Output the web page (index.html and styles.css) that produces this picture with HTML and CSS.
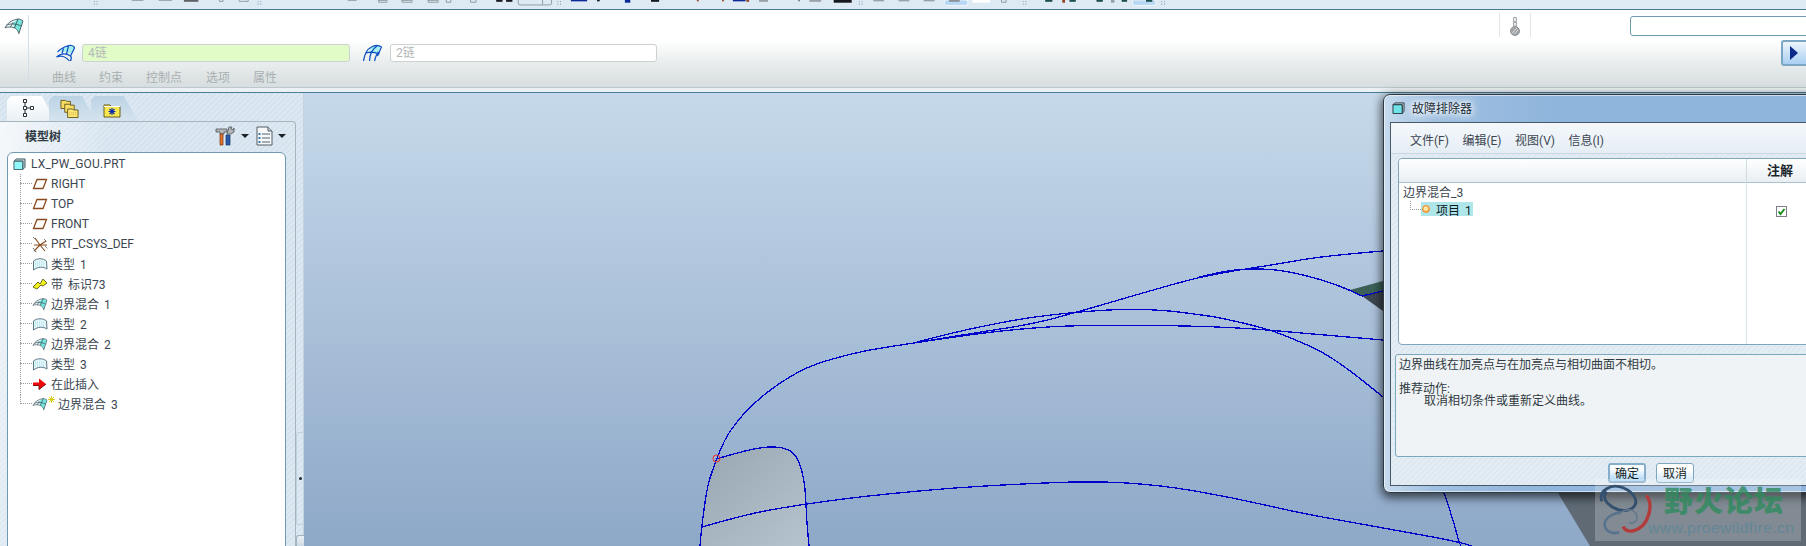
FILE: index.html
```html
<!DOCTYPE html>
<html lang="zh">
<head>
<meta charset="utf-8">
<title>故障排除器</title>
<link rel="stylesheet" href="styles.css">
</head>
<body>
<svg class="defs" width="0" height="0" aria-hidden="true">
  <defs>
    <symbol id="i-blend" viewBox="0 0 20 18">
      <path d="M1 11C3 6 8 3 14 2C16 2 18 3 19 4L15 16C14 12 10 10 6 10C4 10 2 10 1 11Z" fill="#f4fbfc"/>
      <path d="M9 6C11 4 13 3 14 2L19 4L15 16C14 13 12 11 10 10.500Z" fill="#74e6dc"/>
      <path d="M1 11C3 6 8 3 14 2C16 2 18 3 19 4L15 16M1 11C2 10 4 10 6 10C10 10 14 12 15 17M9 5.500L6.500 10M14 2L10.500 11M3 8C8 6 13 7 17 9" fill="none" stroke="#3f5560" stroke-width=".9"/>
    </symbol>
    <symbol id="i-plane" viewBox="0 0 16 12">
      <path d="M5 1.500H14.500L11 10.500H1.500Z" fill="none" stroke="#8a4a1c" stroke-width="1.300"/>
    </symbol>
    <symbol id="i-surf" viewBox="0 0 16 14">
      <path d="M1.500 4C5 1 11 1 14.500 4L15 12C11 9.500 6 9.500 1.500 13Z" fill="#e6f7fa" stroke="#5a7684" stroke-width="1"/>
      <path d="M3 5H13M3 7H13M3 9H13" stroke="#9fdcec" stroke-dasharray="1 1" stroke-width="1"/>
    </symbol>
  </defs>
</svg>

<div class="stage">
  <svg class="toolstrip" viewBox="0 0 1806 10" width="1806" height="10" aria-hidden="true">
    <g fill="#9aa1a6">
      <rect x="46" width="13" height="1"/><rect x="76" width="15" height="1"/><rect x="286" width="10" height="1"/>
      <rect x="320" width="9" height="1"/><rect x="346" width="11" height="1"/><rect x="375" width="11" height="1"/>
      <rect x="743" width="10" height="2"/><rect x="799" width="13" height="2"/><rect x="870" width="12" height="1.500"/>
      <rect x="898" width="12" height="1.500"/><rect x="926" width="12" height="1.500"/>
    </g>
    <g fill="none" stroke="#8c959b">
      <path d="M143.500 0V1.500H147.500V0M165.500 0V1.500H175.500V0M320.500 0V2.500H329.500V0M346.500 0V2.500H357.500V0M375.500 0V2.500H386.500V0M395.500 0V2.500H400.500V0M422.500 0V2.500H428.500V0"/>
      <path d="M475.500 0V3.500Q475.500 5.500 478 5.500H510.500Q512.500 5.500 512.500 3.500V0M502.500 0V5"/>
      <path d="M1012.500 0V2.500H1017.500V0"/>
    </g>
    <rect x="104" width="16" height="2" fill="#5e6266"/>
    <g fill="#15181c"><rect x="451" width="7" height="2"/><rect x="462" width="7" height="2"/><rect x="563" width="3" height="1.500"/><rect x="623" width="9" height="2"/><rect x="787" width="1" height="1.500"/><rect x="826" width="20" height="3"/></g>
    <g fill="#0a2a9a"><rect x="534" width="18" height="1.500"/><rect x="594" width="6" height="3"/><rect x="714" width="14" height="1.500"/></g>
    <g fill="#93401e"><rect x="674" width="2" height="1.500"/><rect x="702" width="2" height="1.500"/><rect x="729" width="3" height="2"/><rect x="1080" width="3" height="3"/></g>
    <rect x="949" width="26" height="6" rx="2" fill="#b9d8f4" stroke="#f4f9fd"/>
    <rect x="954" width="12" height="2" fill="#8b9298"/>
    <rect x="980" width="20" height="3" fill="#fff"/>
    <rect x="1134" width="4" height="3" fill="#9aa1a6"/>
    <rect x="1158" width="26" height="6" rx="2" fill="#b9d8f4" stroke="#f4f9fd"/>
    <g fill="#1b4f4b">
      <rect x="1061" width="8" height="2"/><rect x="1088" width="7" height="2"/><rect x="1118" width="7" height="2"/><rect x="1146" width="6" height="2"/><rect x="1173" width="7" height="2"/>
    </g>
    <g fill="#6c8aa0">
      <path d="M4 1h1v1H4zM7 1h1v1H7zM4 4h1v1H4zM7 4h1v1H7z"/>
      <path d="M186 1h1v1h-1zM189 1h1v1h-1zM186 4h1v1h-1zM189 4h1v1h-1z"/>
      <path d="M519 1h1v1h-1zM522 1h1v1h-1zM519 4h1v1h-1zM522 4h1v1h-1z"/>
      <path d="M854 1h1v1h-1zM857 1h1v1h-1zM854 4h1v1h-1zM857 4h1v1h-1z"/>
      <path d="M1036 1h1v1h-1zM1039 1h1v1h-1zM1036 4h1v1h-1zM1039 4h1v1h-1z"/>
      <path d="M1190 1h1v1h-1zM1193 1h1v1h-1zM1190 4h1v1h-1zM1193 4h1v1h-1z"/>
    </g>
  </svg>

  <header class="ribbon">
    <div class="ribbon-mode">
      <svg class="ribbon-mode-icon" viewBox="0 0 20 18" aria-hidden="true"><use href="#i-blend"/></svg>
    </div>
    <div class="ribbon-main">
      <div class="collector-row">
        <svg class="collector-icon" viewBox="0 0 20 18" aria-hidden="true">
          <path d="M3 8C7 4 12 2 16 2C18 2 19 3 19 4L16 10C12 8 8 7 3 8Z" fill="#a5efee"/>
          <path d="M2 8C6 4 12 1 16 1.500C18 2 19 3 19 4L15 12M1 13C5 9 11 9 15 12C16 13 16 15 15 17M1 13C6 11 11 13 14 17M8 4.500L6.500 9.500M13 2L11 10" fill="none" stroke="#0c4fc0" stroke-width="1.200"/>
        </svg>
        <div class="collector collector--active">4链</div>
        <svg class="collector-icon collector-icon--second" viewBox="0 0 20 18" aria-hidden="true">
          <path d="M8 4C11 2 15 1 18 2L15 11C13 9 10 9 7 10Z" fill="#a5efee"/>
          <path d="M1 17C2 10 5 5 9 3C12 1 16 1 19 3L15 12M7 17C7 10 10 5 15 1.500M12 17C13 13 14 10 16 8M4 9C8 7 12 8 17 10" fill="none" stroke="#0c4fc0" stroke-width="1.200"/>
        </svg>
        <div class="collector">2链</div>
      </div>
      <nav class="ribbon-tabs">
        <span class="ribbon-tab">曲线</span>
        <span class="ribbon-tab">约束</span>
        <span class="ribbon-tab">控制点</span>
        <span class="ribbon-tab">选项</span>
        <span class="ribbon-tab">属性</span>
      </nav>
    </div>
    <div class="ribbon-gauge">
      <svg class="gauge-icon" viewBox="0 0 12 20" aria-hidden="true">
        <path d="M4.500 1.500H7.500V5.500H4.500ZM4.500 6.500H7.500V10H4.500Z" fill="#eceeef" stroke="#a5a9ab"/>
        <circle cx="6" cy="15" r="4.500" fill="#a3a7a9" stroke="#8f9496"/>
        <path d="M3 17L8 12M5 18L9 14" stroke="#d3d5d6"/>
      </svg>
    </div>
    <div class="ribbon-side">
      <div class="side-input"></div>
      <button class="run-button" type="button"><span class="run-arrow"></span></button>
    </div>
  </header>
  <div class="ribbon-edge"></div>

  <main class="workspace">
    <aside class="side-panel">
      <div class="panel-tabs">
        <div class="panel-tab panel-tab--active">
          <svg class="tab-icon" viewBox="0 0 14 19" aria-hidden="true">
            <path d="M1.500 .5h3v3h-3zM1.500 7.500h3v3h-3zM1.500 14.500h3v3h-3zM8.500 7.500h3v3h-3z" fill="#fff" stroke="#2a2f33"/>
            <path d="M3 4V7M3 11V14M5 9H8" stroke="#2a2f33"/>
          </svg>
        </div>
        <div class="panel-tab">
          <svg class="tab-icon tab-icon--folders" viewBox="0 0 20 20" aria-hidden="true">
            <path d="M1 1.500H6L7 2.500H11V10H1Z" fill="#f6dc62" stroke="#6b5a1c"/>
            <path d="M5 5.500H10L11 6.500H15V14H5Z" fill="#f8e06a" stroke="#6b5a1c"/>
            <path d="M8 10.500H13L14 11.500H19V19.500H8Z" fill="#fbe878" stroke="#6b5a1c"/>
            <path d="M10 14.500H17M10 16.500H17" stroke="#d7a93a" stroke-dasharray="1 1"/>
          </svg>
        </div>
        <div class="panel-tab">
          <svg class="tab-icon tab-icon--star" viewBox="0 0 18 15" aria-hidden="true">
            <path d="M1 2H7L8 3.500H17V14H1Z" fill="#f9e94f" stroke="#665a1c"/>
            <path d="M1 3.500H17" stroke="#fff"/>
            <path d="M9 5V12M5.500 8.500H12.500M6.500 6L11.500 11M11.500 6L6.500 11" stroke="#0a2aa8" stroke-width="1.100"/>
          </svg>
        </div>
      </div>

      <section class="tree-card">
        <div class="tree-head">
          <span class="tree-title">模型树</span>
          <div class="tree-tools">
            <svg class="tool-icon" viewBox="0 0 20 20" aria-hidden="true">
              <path d="M1 3H12V6H9V8H5V6H1Z" fill="#b4b7b9" stroke="#4c5053" stroke-width=".8"/>
              <path d="M5 8H8V19H5Z" fill="#e2762a" stroke="#7d2b10" stroke-width=".7"/>
              <path d="M11 9H15V19H11Z" fill="#2a5aa8" stroke="#18356a" stroke-width=".7"/>
              <path d="M12 8L14 1H17L16 3L18 4L19 2V6L16 8Z" fill="#b4b7b9" stroke="#4c5053" stroke-width=".8"/>
            </svg>
            <span class="caret"></span>
            <svg class="tool-icon tool-icon--doc" viewBox="0 0 17 20" aria-hidden="true">
              <path d="M1 1H12L16 5V19H1Z" fill="#f4f8fb" stroke="#555d63"/>
              <path d="M12 1V5H16" fill="#c9d3da" stroke="#555d63"/>
              <path d="M6 8H14M6 12H14M6 16H14" stroke="#58636b"/>
              <path d="M2.500 7h2v2h-2zM2.500 11h2v2h-2zM2.500 15h2v2h-2z" fill="#3e73a8"/>
            </svg>
            <span class="caret"></span>
          </div>
        </div>
        <div class="tree-box">
          <div class="tree-root">
            <svg class="root-icon" viewBox="0 0 14 13" aria-hidden="true">
              <path d="M3.500 1H13V10L10.500 12.500V3.500H1Z" fill="#b7c6cd" stroke="#3e5a62"/>
              <path d="M1 3.500H10.500V12.500H1Z" fill="#8ff8fb" stroke="#3e5a62"/>
            </svg>
            <span class="root-label">LX_PW_GOU.PRT</span>
          </div>
          <ul class="tree-list">
            <li class="tree-row"><i class="stub"></i><svg class="row-icon" viewBox="0 0 16 12" aria-hidden="true"><use href="#i-plane"/></svg><span class="row-label--latin">RIGHT</span></li>
            <li class="tree-row"><i class="stub"></i><svg class="row-icon" viewBox="0 0 16 12" aria-hidden="true"><use href="#i-plane"/></svg><span class="row-label--latin">TOP</span></li>
            <li class="tree-row"><i class="stub"></i><svg class="row-icon" viewBox="0 0 16 12" aria-hidden="true"><use href="#i-plane"/></svg><span class="row-label--latin">FRONT</span></li>
            <li class="tree-row"><i class="stub"></i><svg class="row-icon row-icon--csys" viewBox="0 0 16 17" aria-hidden="true"><path d="M8 9L3 2M8 9L14 5M8 9L2 15M8 9L13 15M2 9H15" fill="none" stroke="#8a4a1c" stroke-width="1.100"/><path d="M1 1L4 4M12 3L15 6M13 10L16 13M1 12L4 16" stroke="#444" stroke-dasharray="1 1"/></svg><span class="row-label--latin">PRT_CSYS_DEF</span></li>
            <li class="tree-row"><i class="stub"></i><svg class="row-icon" viewBox="0 0 16 14" aria-hidden="true"><use href="#i-surf"/></svg><span class="row-label">类型 1</span></li>
            <li class="tree-row"><i class="stub"></i><svg class="row-icon" viewBox="0 0 16 12" aria-hidden="true"><path d="M1 9L6 4L8 6L11 1L15 5L11 8L9 7L5 11Z" fill="#f4f01c" stroke="#6c6a20"/></svg><span class="row-label">带 标识73</span></li>
            <li class="tree-row"><i class="stub"></i><svg class="row-icon" viewBox="0 0 20 18" aria-hidden="true"><use href="#i-blend"/></svg><span class="row-label">边界混合 1</span></li>
            <li class="tree-row"><i class="stub"></i><svg class="row-icon" viewBox="0 0 16 14" aria-hidden="true"><use href="#i-surf"/></svg><span class="row-label">类型 2</span></li>
            <li class="tree-row"><i class="stub"></i><svg class="row-icon" viewBox="0 0 20 18" aria-hidden="true"><use href="#i-blend"/></svg><span class="row-label">边界混合 2</span></li>
            <li class="tree-row"><i class="stub"></i><svg class="row-icon" viewBox="0 0 16 14" aria-hidden="true"><use href="#i-surf"/></svg><span class="row-label">类型 3</span></li>
            <li class="tree-row"><i class="stub"></i><svg class="row-icon" viewBox="0 0 16 13" aria-hidden="true"><path d="M1 5H7V1L14 6.500L7 12V8H1Z" fill="#ee0a0a"/><path d="M1 8H7V12L14 6.500" fill="none" stroke="#7c1212"/></svg><span class="row-label">在此插入</span></li>
            <li class="tree-row tree-row--last"><i class="stub"></i><svg class="row-icon" viewBox="0 0 20 18" aria-hidden="true"><use href="#i-blend"/></svg><svg class="row-star" viewBox="0 0 8 8" aria-hidden="true"><path d="M4 0V8M0 4H8M1 1L7 7M7 1L1 7" stroke="#d4c400"/></svg><span class="row-label">边界混合 3</span></li>
          </ul>
        </div>
      </section>

      <div class="sash">
        <div class="sash-grip"><i class="sash-dot"></i></div>
        <div class="sash-stub"></div>
      </div>
    </aside>

    <section class="viewport">
      <svg class="model" viewBox="304 93 1502 453" aria-hidden="true">
        <defs>
          <linearGradient id="patch" x1="0" y1="0" x2="1" y2="1">
            <stop offset="0" stop-color="#98a6b2"/>
            <stop offset="1" stop-color="#b6c4d0"/>
          </linearGradient>
        </defs>
        <polygon points="1558,493 1590,546 1806,546 1806,493" fill="#5f6a75"/>
        <polygon points="1350,290 1383,281 1383,291 1362,296" fill="#3c6058"/>
        <polygon points="1362,296 1383,291 1383,311" fill="#3d4750"/>
        <path class="patch" d="M716 459Q740 452 751.500 449.500Q763 447 772.500 447Q782 447 788.500 450Q795 453 798.500 461.500Q802 470 803.500 478.500Q805 487 805.500 495.500Q806 504 806.500 514.500Q807 525 809 546H700Q701 532 704 509.500Q707 487 710 478Q713 469 716 459Z"/>
        <g class="edges">
          <path d="M700 546Q701 532 704 509.500Q707 487 710 478Q713 469 715 463.500Q717 458 721.500 447.500Q726 437 731 430Q736 423 741.500 416.500Q747 410 757 401Q767 392 779.500 383.500Q792 375 803.500 369.500Q815 364 832.500 359Q850 354 865 351Q880 348 914 343"/>
          <path d="M914 343Q928 339 948.500 334Q969 329 994.500 324Q1020 319 1035 317Q1050 315 1064.500 313.500Q1079 312 1100 310.500Q1121 309 1141.500 309.500Q1162 310 1178.500 312Q1195 314 1208.500 316Q1222 318 1245 323.500Q1268 329 1282 334.500Q1296 340 1309.500 346Q1323 352 1339 363Q1355 374 1383 397"/>
          <path d="M914 343Q974 333 1003.500 328.500Q1033 324 1056 317.800Q1079 311.500 1097 306.300Q1115 301 1134 295.500Q1153 290 1176 283.500Q1199 277 1222 273Q1245 269 1261.500 266.500Q1278 264 1300.500 260Q1323 256 1383 251"/>
          <path d="M1199 277Q1225 271 1235 270Q1245 269 1256.500 269Q1268 269 1279.500 270.500Q1291 272 1307 276Q1323 280 1336.500 285Q1350 290 1362 296L1383 291"/>
          <path d="M914 343Q974 334 997 331.500Q1020 329 1040.500 327.500Q1061 326 1088.500 325.500Q1116 325 1155 325.500Q1194 326 1217 327Q1240 328 1254 329Q1268 330 1295.500 332.500Q1323 335 1383 340"/>
          <path d="M716 459Q740 452 751.500 449.500Q763 447 772.500 447Q782 447 788.500 450Q795 453 798.500 461.500Q802 470 803.500 478.500Q805 487 805.500 495.500Q806 504 806.500 514.500Q807 525 809 546"/>
          <path d="M702 527Q730 519 746.500 515Q763 511 784.500 507.500Q806 504 824.500 501.500Q843 499 860 497Q877 495 913.500 491.500Q950 488 985 486Q1020 484 1057 482.500Q1094 481 1127 483Q1160 485 1195 491Q1230 497 1265 505Q1300 513 1325 517.500Q1350 522 1375 526.500Q1400 531 1430 536.500Q1460 542 1472 546"/>
          <path d="M1444 493Q1452 515 1459 542L1461 546"/>
        </g>
        <circle class="pick-mark" cx="716.500" cy="458.500" r="3.500"/>
      </svg>
    </section>
  </main>

  <div class="dialog">
    <div class="dialog-title">
      <svg class="dialog-icon" viewBox="0 0 14 13" aria-hidden="true">
        <path d="M3 1H13V10L11 12.500V3H1Z" fill="#c7d3d9" stroke="#26343c"/>
        <path d="M1 3H11V12.500H1Z" fill="#6fe3e8" stroke="#26343c"/>
      </svg>
      <span class="dialog-name">故障排除器</span>
    </div>
    <div class="dialog-body">
      <nav class="dialog-menu">
        <span>文件(F)</span><span>编辑(E)</span><span>视图(V)</span><span>信息(I)</span>
      </nav>
      <div class="issue-table">
        <div class="issue-head"><span></span><span class="issue-col">注解</span></div>
        <div class="issue-rows">
          <div class="issue-tree">
            <div class="issue-group">边界混合_3</div>
            <div class="issue-item">
              <i class="issue-stub"></i>
              <div class="issue-pick"><i class="issue-dot"></i><span>项目 1</span></div>
            </div>
          </div>
          <div class="issue-marks">
            <svg class="issue-check" viewBox="0 0 11 11" aria-hidden="true">
              <rect x=".5" y=".5" width="10" height="10" fill="#fff" stroke="#7b8187"/>
              <path d="M2.500 5.500L4.500 8L8.500 3" fill="none" stroke="#0f8a12" stroke-width="1.800"/>
            </svg>
          </div>
        </div>
      </div>
      <div class="message">
        <p class="message-line">边界曲线在加亮点与在加亮点与相切曲面不相切。</p>
        <p class="message-head">推荐动作:</p>
        <p class="message-action">取消相切条件或重新定义曲线。</p>
      </div>
      <div class="dialog-actions">
        <button class="dialog-btn dialog-btn--default" type="button">确定</button>
        <button class="dialog-btn" type="button">取消</button>
      </div>
    </div>
  </div>

  <div class="watermark">
    <svg class="watermark-logo" viewBox="0 0 62 58" aria-hidden="true">
      <path d="M5 20C1 9 15 1 27 6C39 11 45 22 35 28C27 32 17 28 11 22C7 18 7 13 10 10" fill="none" stroke="#33506f" stroke-width="3"/>
      <path d="M25 31C13 33 5 40 9 48C11 52 17 54 23 52" fill="none" stroke="#55728e" stroke-width="2.500"/>
      <path d="M51 14C59 24 53 46 39 50C33 52 29 50 27 46" fill="none" stroke="#b23b3b" stroke-width="3.500"/>
      <path d="M23 34C27 28 37 26 41 34C43 40 37 44 33 42" fill="none" stroke="#64788a" stroke-width="1.500"/>
    </svg>
    <div class="watermark-text">
      <span class="watermark-name">野火论坛</span>
      <span class="watermark-url">www.proewildfire.cn</span>
    </div>
  </div>
</div>
</body>
</html>
```

FILE: styles.css
```css
* { box-sizing: border-box; }

html, body {
  margin: 0;
  padding: 0;
  width: 1806px;
  height: 546px;
  overflow: hidden;
}

body {
  font-family: Roboto, "Noto Sans CJK SC", sans-serif;
  font-size: 12px;
  color: #3b4651;
}

.defs { position: absolute; }

.stage {
  position: relative;
  display: flex;
  flex-direction: column;
  width: 1806px;
  height: 546px;
  overflow: hidden;
}

/* top toolbar, mostly cut off */
.toolstrip {
  display: block;
  flex: none;
  background: #dde9f3;
  border-bottom: 1px solid #4b7d96;
}

/* ribbon */
.ribbon {
  display: flex;
  flex: none;
  height: 78px;
  background: linear-gradient(#fff 0, #fff 40%, #e9eded 68%, #d7dedf 100%);
  border-bottom: 1px solid #bcc8cd;
}

.ribbon-mode {
  flex: none;
  width: 29px;
  height: 72px;
  margin-top: 5px;
  border-right: 1px solid #d3dfe6;
}

.ribbon-mode-icon {
  display: block;
  width: 20px;
  height: 18px;
  margin: 2px 0 0 4px;
}

.ribbon-main {
  display: flex;
  flex: none;
  flex-direction: column;
  width: 628px;
  padding: 34px 0 0 26px;
}

.collector-row {
  display: flex;
  align-items: center;
  height: 18px;
}

.collector-icon {
  flex: none;
  width: 21px;
  height: 18px;
}

.collector-icon--second { margin: 0 7px 0 12px; }

.collector {
  width: 267px;
  height: 18px;
  margin-left: 6px;
  padding-left: 5px;
  background: #fff;
  border: 1px solid #ccd1d1;
  border-radius: 3px;
  color: #b3b8b8;
  font-size: 12px;
  line-height: 16px;
}

.collector--active {
  width: 268px;
  background: #e2fcc8;
}

.collector-icon--second + .collector { margin-left: 0; }

.ribbon-tabs {
  display: flex;
  margin-top: 8px;
}

.ribbon-tab {
  color: #a9b0b2;
  font-size: 12px;
  line-height: 17px;
}

.ribbon-tab:nth-child(1) { margin-left: -3px; }
.ribbon-tab:nth-child(2) { margin-left: 23px; }
.ribbon-tab:nth-child(3) { margin-left: 23px; }
.ribbon-tab:nth-child(4) { margin-left: 24px; }
.ribbon-tab:nth-child(5) { margin-left: 23px; }

.ribbon-gauge {
  display: flex;
  flex: none;
  justify-content: center;
  width: 32px;
  height: 24px;
  margin: 3px 0 0 842px;
  padding-top: 3px;
  border-left: 1px solid #e2e5e6;
  border-right: 1px solid #e2e5e6;
}

.gauge-icon {
  width: 12px;
  height: 20px;
}

.ribbon-side {
  display: flex;
  flex: none;
  flex-direction: column;
  width: 177px;
  margin-left: 99px;
  padding-top: 6px;
}

.side-input {
  flex: none;
  width: 190px;
  height: 20px;
  background: #fff;
  border: 1px solid #6f9ab1;
  border-radius: 3px;
}

.run-button {
  display: flex;
  flex: none;
  align-items: center;
  justify-content: center;
  align-self: flex-start;
  width: 32px;
  height: 26px;
  margin: 4px 0 0 151px;
  padding: 0 7px 0 0;
  background: linear-gradient(#edf5fc, #a9cff2);
  border: 2px solid #7ba7c4;
  border-radius: 3px;
}

.run-arrow {
  width: 0;
  height: 0;
  border-top: 7px solid transparent;
  border-bottom: 7px solid transparent;
  border-left: 8px solid #0a2a8c;
}

.ribbon-edge {
  flex: none;
  height: 5px;
  background: #eaf0f3;
  border-bottom: 1px solid #4b7d96;
}

/* workspace */
.workspace {
  display: flex;
  flex: 1;
  min-height: 0;
}

.side-panel {
  position: relative;
  flex: none;
  width: 304px;
  padding-top: 3px;
  background: repeating-linear-gradient(135deg, #d5e3ee 0 2px, #dde8f2 2px 4px);
  border-right: 1px solid #c3d3df;
}

.panel-tabs {
  display: flex;
  height: 25px;
  padding-left: 7px;
}

.panel-tab {
  display: flex;
  align-items: flex-start;
  width: 48px;
  height: 25px;
  margin-right: -6px;
  padding: 3px 0 0 15px;
  background: linear-gradient(#bcd3e5, #d5e3ee);
  clip-path: polygon(0 4px, 4px 0, 33px 0, 47px 100%, 0 100%);
}

.panel-tab--active {
  padding-left: 15px;
  background: linear-gradient(#fff, #e9f0f5);
  clip-path: polygon(0 4px, 4px 0, 35px 0, 48px 100%, 0 100%);
}

.tab-icon {
  width: 14px;
  height: 19px;
}

.tab-icon--folders { width: 19px; height: 19px; margin-left: -4px; }
.tab-icon--star { width: 18px; height: 15px; margin: 4px 0 0 -3px; }

.tree-card {
  height: 426px;
  width: 296px;
  padding: 0 9px 0 7px;
  background: linear-gradient(100deg, rgba(255, 255, 255, .75) 0, rgba(255, 255, 255, 0) 30%);
  border: 1px solid #a8b5bd;
  border-left: 0;
  border-bottom: 0;
  border-radius: 0 4px 0 0;
}

.tree-head {
  display: flex;
  align-items: center;
  justify-content: space-between;
  height: 30px;
  padding-bottom: 3px;
}

.tree-title {
  margin-left: 18px;
  color: #2f3a42;
  font-size: 12px;
  font-weight: 700;
}

.tree-tools {
  display: flex;
  align-items: center;
}

.tool-icon {
  width: 20px;
  height: 20px;
  margin-right: 6px;
}

.tool-icon--doc {
  width: 17px;
  margin: 0 5px 0 7px;
}

.caret {
  width: 0;
  height: 0;
  border-top: 4px solid #1c2226;
  border-left: 4px solid transparent;
  border-right: 4px solid transparent;
}

.tree-box {
  height: 400px;
  padding-top: 1px;
  background: #fff;
  border: 1px solid #6f9ab1;
  border-radius: 6px 6px 0 0;
}

.tree-root {
  display: flex;
  align-items: center;
  gap: 5px;
  height: 20px;
  padding-left: 5px;
}

.root-icon {
  flex: none;
  width: 13px;
  height: 12px;
}

.root-label { letter-spacing: .2px; }

.tree-list {
  margin: 0 0 0 12px;
  padding: 0;
  list-style: none;
}

.tree-row {
  display: flex;
  align-items: center;
  height: 20px;
  background: linear-gradient(#9a9a9a 50%, transparent 50%) 0 0 / 1px 2px repeat-y;
}

.tree-row--last { background: none; }

.stub {
  flex: none;
  align-self: flex-start;
  width: 12px;
  height: 10px;
  border-bottom: 1px dotted #9a9a9a;
}

.tree-row--last .stub { border-left: 1px dotted #9a9a9a; }

.row-icon {
  flex: none;
  width: 16px;
  height: 14px;
  margin-right: 2px;
}

.row-icon--csys { height: 17px; }

.row-star {
  flex: none;
  width: 7px;
  height: 7px;
  align-self: flex-start;
  margin: 2px 2px 0 -2px;
}

.row-label {
  margin: -2px 0 0 1px;
  word-spacing: 2px;
}

.row-label--latin { margin-left: 1px; }

.sash {
  position: absolute;
  top: 339px;
  left: 296px;
  display: flex;
  flex-direction: column;
  gap: 10px;
  width: 8px;
}

.sash-grip {
  display: flex;
  align-items: center;
  justify-content: center;
  height: 93px;
  border: 1px solid #bfd2e0;
  border-right: 0;
  border-radius: 3px 0 0 3px;
}

.sash-dot {
  width: 3px;
  height: 3px;
  background: #1e2830;
  border-radius: 50%;
}

.sash-stub {
  height: 20px;
  background: linear-gradient(#eaf1f6, #b7c9d6);
  border: 1px solid #9fb3c1;
  border-right: 0;
  border-radius: 3px 0 0 0;
}

.viewport {
  flex: 1;
  min-width: 0;
  background: linear-gradient(#c6d9ea, #8ea8c8);
}

.model {
  display: block;
  width: 100%;
  height: 100%;
}

.patch { fill: url(#patch); }

.edges path {
  fill: none;
  stroke: #0000cc;
  stroke-width: 1.300;
  shape-rendering: crispEdges;
}

.pick-mark {
  fill: none;
  stroke: #f02a2a;
  stroke-width: 1;
}

/* dialog window */
.dialog {
  position: absolute;
  top: 94px;
  left: 1383px;
  display: flex;
  flex-direction: column;
  width: 440px;
  height: 399px;
  padding: 0 6px 6px;
  background: linear-gradient(90deg, #c7dbee 0, #9ebfe0 12%, #8fb5dc 40%, #8fb5dc 100%);
  border: 1px solid #2d3a44;
  border-radius: 7px;
  box-shadow: 0 3px 10px 2px rgba(0, 0, 0, .62), inset 0 0 0 1px rgba(255, 255, 255, .55);
}

.dialog-title {
  display: flex;
  flex: none;
  align-items: center;
  gap: 7px;
  height: 27px;
  padding: 0 0 2px 2px;
}

.dialog-icon {
  width: 13px;
  height: 12px;
}

.dialog-name {
  color: #1c2a36;
  font-size: 12px;
  text-shadow: 0 0 5px #fff, 0 0 8px #fff, 0 0 12px #fff;
}

.dialog-body {
  display: flex;
  flex: 1;
  flex-direction: column;
  min-height: 0;
  background: repeating-linear-gradient(135deg, #dde8f1 0 2px, #e4edf4 2px 4px);
  border: 1px solid #48596a;
}

.dialog-menu {
  display: flex;
  flex: none;
  align-items: center;
  gap: 13.500px;
  height: 31px;
  padding: 2px 0 0 19px;
  background: linear-gradient(#f4f8fb, #e5eef5);
  border-bottom: 1px solid #c8d8e3;
}

.issue-table {
  display: flex;
  flex: none;
  flex-direction: column;
  height: 187px;
  margin: 4px 0 0 7px;
  width: 420px;
  background: #fff;
  border: 1px solid #7fa6bc;
  border-radius: 4px;
}

.issue-head {
  display: grid;
  flex: none;
  grid-template-columns: 347px 1fr;
  height: 24px;
  background: linear-gradient(#fff, #e8eef2);
  border-bottom: 1px solid #abc0cf;
  border-radius: 4px 4px 0 0;
}

.issue-col {
  border-left: 1px solid #cddbe5;
  color: #1b252c;
  font-size: 13px;
  font-weight: 700;
  line-height: 24px;
  padding-left: 20px;
}

.issue-rows {
  display: grid;
  flex: 1;
  grid-template-columns: 347px 1fr;
}

.issue-tree { padding: 1px 0 0 4px; }

.issue-group {
  height: 19px;
  line-height: 19px;
}

.issue-item {
  display: flex;
  align-items: flex-start;
  padding-left: 7px;
  margin-top: -2px;
}

.issue-stub {
  flex: none;
  width: 11px;
  height: 9px;
  border-left: 1px dotted #9a9a9a;
  border-bottom: 1px dotted #9a9a9a;
}

.issue-pick {
  display: flex;
  align-items: center;
  gap: 6px;
  width: 52px;
  height: 14px;
  padding-left: 1px;
  margin-top: 1px;
  background: #aee6ea;
  color: #10181e;
  white-space: nowrap;
  word-spacing: 2px;
}

.issue-dot {
  flex: none;
  width: 8px;
  height: 8px;
  background: radial-gradient(circle at 45% 40%, #ffe9a8 0 30%, #f8a33c 75%);
  border: 1px solid #ef8b27;
  border-radius: 50%;
}

.issue-marks {
  padding: 23px 0 0 29px;
  border-left: 1px solid #d6e2ea;
}

.issue-check {
  display: block;
  width: 11px;
  height: 11px;
}

.message {
  flex: none;
  height: 103px;
  margin: 9px 0 0 4px;
  width: 428px;
  padding: 2px 3px;
  background: #eff3f5;
  border: 1px solid #7aa8bf;
  border-radius: 3px;
  color: #2f3a42;
}

.message p {
  margin: 0;
  line-height: 16px;
}

.message .message-head { margin-top: 8px; }

.message .message-action {
  margin-top: -4px;
  padding-left: 25px;
}

.dialog-actions {
  display: flex;
  flex: none;
  gap: 10px;
  margin-top: 6px;
  padding-left: 217px;
}

.dialog-btn {
  width: 38px;
  height: 20px;
  padding: 0;
  background: linear-gradient(#fff 30%, #cfe6f8);
  border: 1px solid #7fa6bc;
  border-radius: 3px;
  color: #151d22;
  font: 12px/18px "Noto Sans CJK SC", sans-serif;
}

.dialog-btn--default {
  background: linear-gradient(#f7fbfe 30%, #abd5f6);
  border: 2px solid #86aec8;
  line-height: 16px;
}

/* forum watermark */
.watermark {
  position: absolute;
  top: 479px;
  left: 1595px;
  display: flex;
  width: 206px;
  height: 62px;
  background: rgba(255, 255, 255, .22);
}

.watermark-logo {
  flex: none;
  width: 60px;
  height: 58px;
  margin: 2px 0 0 2px;
}

.watermark-text {
  display: flex;
  flex-direction: column;
  margin-left: -6px;
  padding-top: 6px;
}

.watermark-name {
  margin-left: 13px;
  color: #2f8a5e;
  font-size: 29px;
  font-weight: 900;
  letter-spacing: 1px;
  line-height: 34px;
  opacity: .8;
  white-space: nowrap;
}

.watermark-url {
  margin-left: -3px;
  color: #5c8799;
  font-family: "Liberation Sans", sans-serif;
  font-size: 15.500px;
  letter-spacing: .5px;
  line-height: 18px;
  opacity: .85;
  white-space: nowrap;
}
```
